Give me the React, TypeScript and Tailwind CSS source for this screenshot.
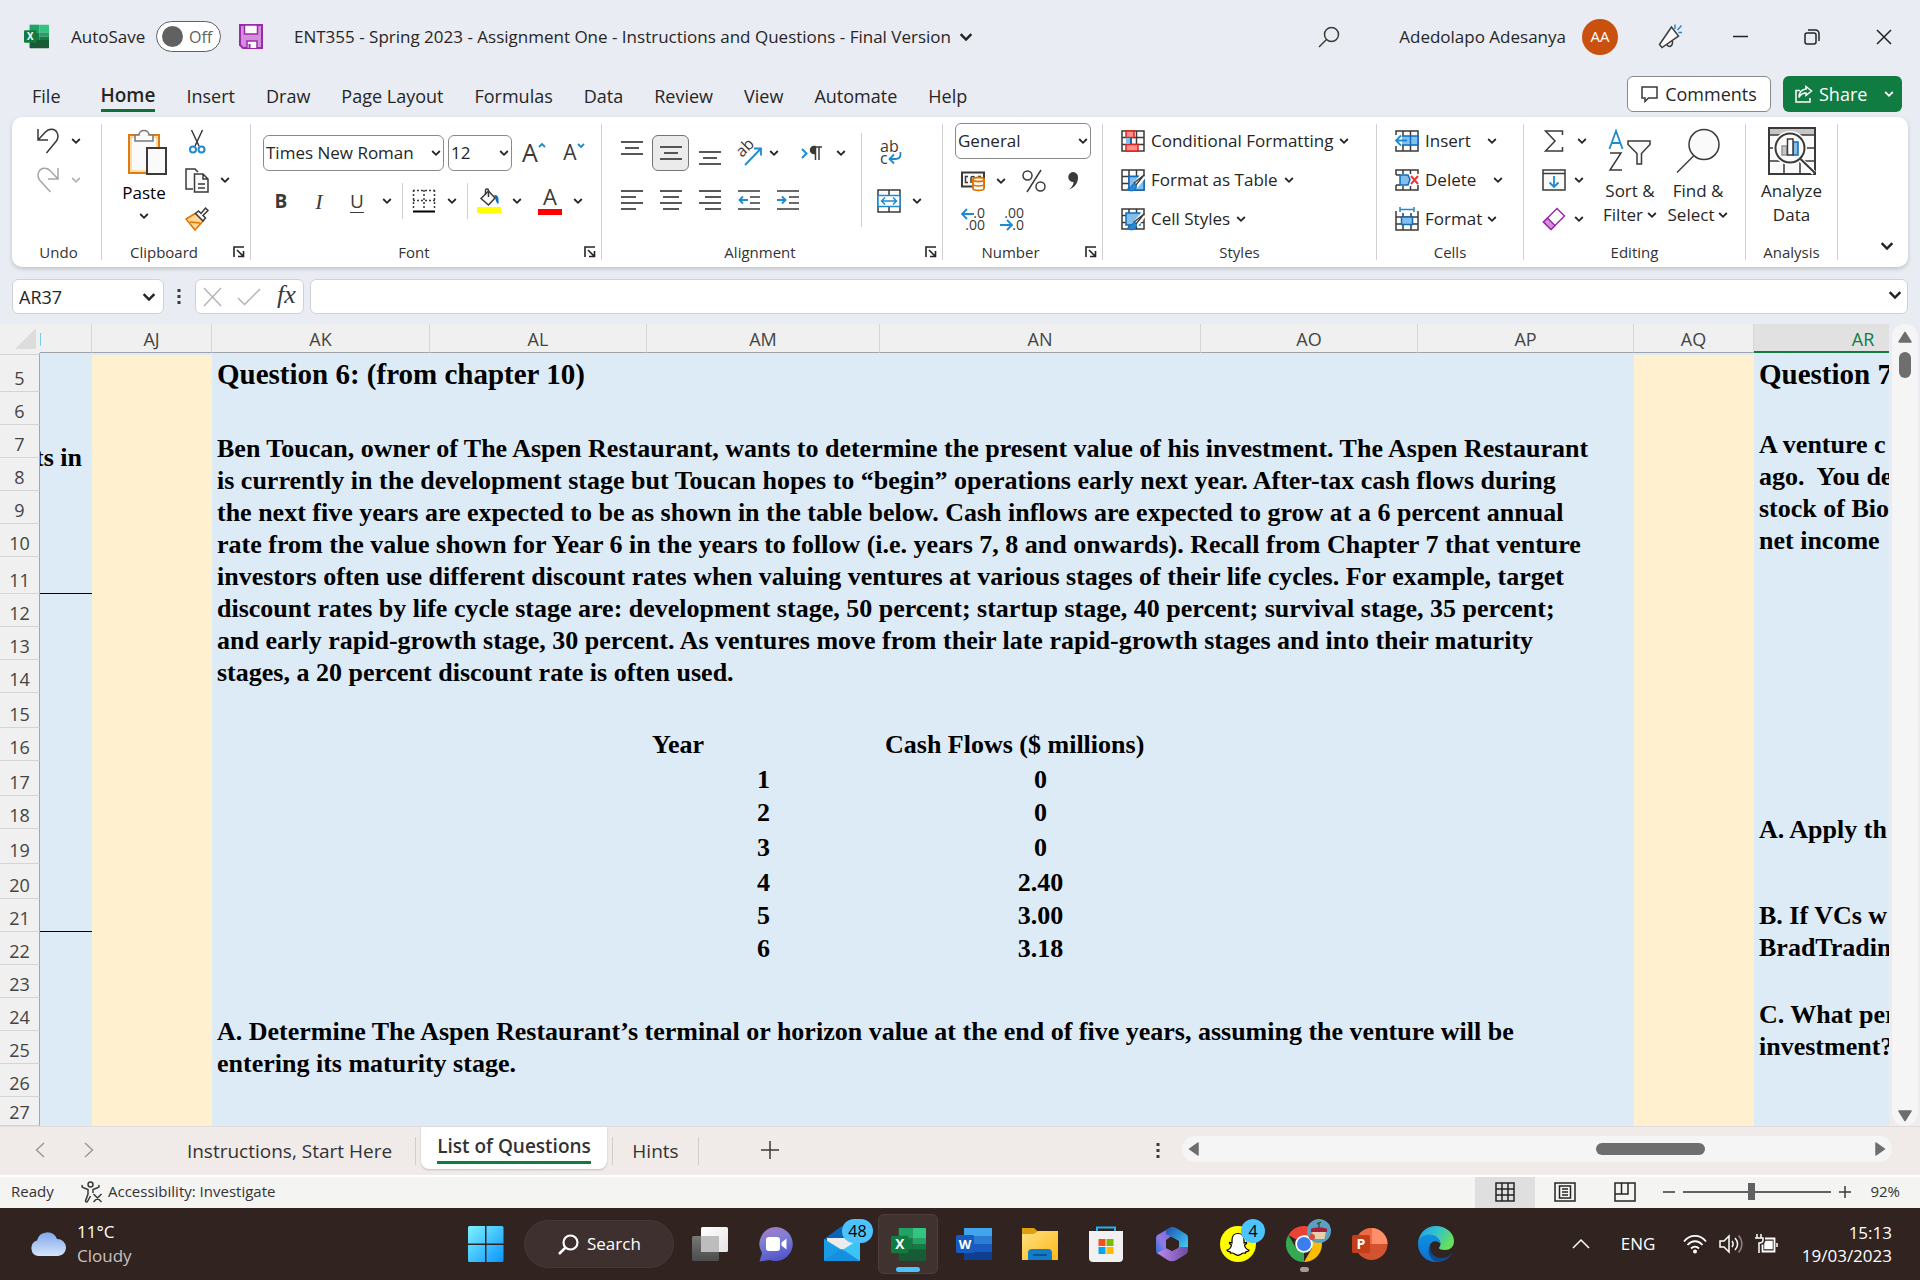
import type { ReactNode } from "react";

const INK = "#3b3a39";
const BLUE = "#1e8bd0";

/* ---------- icon helpers ---------- */

function Svg({ w, h, children, className = "" }: { w: number; h: number; children: ReactNode; className?: string }) {
  return (
    <svg
      width={w}
      height={h}
      viewBox={`0 0 ${w} ${h}`}
      fill="none"
      stroke={INK}
      strokeWidth="1.5"
      className={`shrink-0 overflow-visible ${className}`}
      aria-hidden="true"
    >
      {children}
    </svg>
  );
}

function Chevron({ color = "#242424", size = 10 }: { color?: string; size?: number }) {
  return (
    <svg width={size} height={size} viewBox="0 0 10 10" fill="none" className="shrink-0" aria-hidden="true">
      <path d="M1.2 3 5 6.8 8.8 3" stroke={color} strokeWidth="1.8" />
    </svg>
  );
}

function Lines({ rows, className = "" }: { rows: [number, number, number][]; className?: string }) {
  return (
    <Svg w={22} h={24} className={className}>
      {rows.map(([x1, x2, y]) => (
        <path key={y} d={`M${x1} ${y}H${x2}`} strokeWidth="1.7" />
      ))}
    </Svg>
  );
}

function Launcher() {
  return (
    <button type="button" aria-label="More options" className="flex w-6 items-center pl-[7px]">
      <Svg w={12} h={12}>
        <path d="M1 11V1h10M4 4l6 6M10.500 5v5.500H5" stroke="#242424" strokeWidth="1.6" />
      </Svg>
    </button>
  );
}

function ExcelLogo({ size }: { size: number }) {
  return (
    <svg width={size} height={size} viewBox="0 0 36 34" aria-hidden="true" className="shrink-0">
      <path d="M8 0h14v11H8z" fill="#21a366" />
      <path d="M22 0h13a1 1 0 0 1 1 1v10H22z" fill="#33c481" />
      <path d="M8 11h14v11H8z" fill="#107c41" />
      <path d="M22 11h14v6H22z" fill="#21a366" />
      <path d="M22 17h14v6H22z" fill="#107c41" />
      <path d="M8 22h28v11a1 1 0 0 1-1 1H9a1 1 0 0 1-1-1z" fill="#185c37" />
      <rect x="0" y="8" width="18" height="18" rx="1.500" fill="#107c41" />
      <text x="9" y="22" textAnchor="middle" fontFamily="Open Sans" fontWeight="700" fontSize="14" fill="#fff">
        X
      </text>
    </svg>
  );
}

/* ---------- title bar and tabs ---------- */

function TitleBar() {
  return (
    <header className="flex h-[73px] items-center pr-7 pl-6 text-[17px] text-[#262626]">
      <ExcelLogo size={25} />
      <label className="ml-[22px] flex items-center">
        <span className="w-[85px]">AutoSave</span>
        <span className="flex h-[31px] w-[65px] items-center gap-1.5 rounded-full border border-[#616161] bg-white pl-[5px] text-[16px] text-[#616161]">
          <input type="checkbox" role="switch" className="size-[21px] appearance-none rounded-full bg-[#616161]" />
          Off
        </span>
      </label>
      <button type="button" aria-label="Save" className="ml-[18px]">
        <Svg w={24} h={25}>
          <path d="M1 1h22v23H4l-3-3z" fill="#d48fdc" stroke="#9a2ba8" strokeWidth="2" />
          <path d="M5.500 1h13v9h-13zM8 24v-7h10v7" fill="#fafafa" stroke="#9a2ba8" />
          <path d="M10.500 20v4" stroke="#9a2ba8" strokeWidth="2" />
        </Svg>
      </button>
      <button type="button" className="ml-[31px] flex items-center gap-2">
        <span>ENT355 - Spring 2023 - Assignment One - Instructions and Questions - Final Version</span>
        <Chevron size={14} />
      </button>

      <div className="ml-auto flex items-center">
        <button type="button" aria-label="Search">
          <Svg w={22} h={22}>
            <circle cx="13.500" cy="8.500" r="7" />
            <path d="M8.500 13.500 1 21" />
          </Svg>
        </button>
        <span className="ml-[54px] w-[172px] text-right">Adedolapo Adesanya</span>
        <span className="ml-4 flex size-9 items-center justify-center rounded-full bg-[#ca5010] text-[15px] text-white">AA</span>
        <button type="button" aria-label="Coming soon" className="ml-10">
          <Svg w={24} h={25}>
            <path d="M13.500 3 1.500 20.500l2.500 3L20.500 12z" fill="#fafafa" />
            <path d="M9 20.500c1 3 6 3 5.500-3.500" />
            <path d="M17 5V.5M19.500 6l4-4.500M20.500 8.500H24" stroke={BLUE} />
          </Svg>
        </button>
        <button type="button" aria-label="Minimize" className="ml-[51px]">
          <Svg w={15} h={16}>
            <path d="M0 7.500h15" stroke="#242424" />
          </Svg>
        </button>
        <button type="button" aria-label="Restore" className="ml-14">
          <Svg w={16} h={16}>
            <rect x="1" y="4" width="11" height="11" rx="2" stroke="#242424" />
            <path d="M4 1h7.500A3.500 3.500 0 0 1 15 4.500V12" stroke="#242424" />
          </Svg>
        </button>
        <button type="button" aria-label="Close" className="ml-14">
          <Svg w={16} h={16}>
            <path d="m1 1 14 14M15 1 1 15" stroke="#242424" />
          </Svg>
        </button>
      </div>
    </header>
  );
}

const TABS = ["Insert", "Draw", "Page Layout", "Formulas", "Data", "Review", "View", "Automate", "Help"];

function TabBar() {
  return (
    <div className="flex h-11 items-start pr-[18px] pl-8 text-[18px] leading-[30px] text-[#262626]">
      <nav className="flex gap-[31px] pt-[7px]">
        <button type="button" className="mr-[9px]">File</button>
        <button type="button" className="h-8 border-b-[3px] border-[#0f703b] text-[19px] font-semibold">Home</button>
        {TABS.map((tab) => (
          <button key={tab} type="button">{tab}</button>
        ))}
      </nav>
      <div className="ml-auto flex gap-3 pt-[3px]">
        <button
          type="button"
          className="flex h-9 w-36 items-center justify-center gap-[7px] rounded-md border border-[#8a8a8a] bg-white"
        >
          <Svg w={17} h={17}>
            <path d="M1 1h15v11H7.500L4 15.500V12H1z" />
          </Svg>
          Comments
        </button>
        <button
          type="button"
          className="flex h-9 w-[119px] items-center rounded-md bg-[#107c41] pl-3 text-white"
        >
          <Svg w={18} h={18}>
            <path d="M5 5.500H1V17h14v-4" stroke="#fff" />
            <path d="M11 1.500 16.500 6 11 10.500V8C7.500 8 5.500 9.500 4 12.500 4 8 6.500 4.500 11 4z" stroke="#fff" />
          </Svg>
          <span className="ml-1.5 w-[65px] text-left">Share</span>
          <Chevron color="#fff" />
        </button>
      </div>
    </div>
  );
}

/* ---------- ribbon ---------- */

function Group({ label, width, launcher, children }: { label: string; width: string; launcher?: boolean; children: ReactNode }) {
  return (
    <>
      <section aria-label={label} className={`flex shrink-0 flex-col pb-[5px] ${width}`}>
        <div className="flex h-[125px]">{children}</div>
        <div className="flex h-5 items-center text-[15px] leading-5 text-[#333]">
          <span className="flex-1 pb-px text-center">{label}</span>
          {launcher && <Launcher />}
        </div>
      </section>
      <div className="my-[7px] w-px shrink-0 bg-[#d1d1d1]" />
    </>
  );
}

function Tool({ label, width, active, children }: { label: string; width: string; active?: boolean; children?: ReactNode }) {
  return (
    <button
      type="button"
      aria-label={label}
      className={`flex h-9 shrink-0 items-center justify-center ${width} ${
        active ? "rounded-md border border-[#757575] bg-[#ebebeb]" : ""
      }`}
    >
      {children}
    </button>
  );
}

function More({ width, color }: { width: string; color?: string }) {
  return (
    <Tool label="More" width={width}>
      <Chevron color={color} />
    </Tool>
  );
}

function Combo({ label, value, width }: { label: string; value: string; width: string }) {
  return (
    <div className={`relative ${width}`}>
      <select
        aria-label={label}
        className="block h-9 w-full appearance-none rounded-md border border-[#8a8a8a] bg-white pl-[2px] text-[17px] text-[#262626]"
      >
        <option>{value}</option>
      </select>
      <span className="pointer-events-none absolute top-[13px] right-[3px]">
        <Chevron />
      </span>
    </div>
  );
}

function GridLines() {
  return <path d="M1 1h22v20H1zM1 7.500h22M1 14.500h22M8 1v20M15.500 1v20" />;
}

function Brush() {
  return (
    <>
      <path d="M22.500 6.500 14 17" stroke="#fff" strokeWidth="6" />
      <path d="M23 6 15 16l-2-2z" fill="#fafafa" stroke={INK} strokeWidth="1.300" />
      <path d="M14 14.500c-4 0-3 5-7.500 5.500 3 3.500 9 2 9-3.500z" fill="#2b88d8" stroke="#0f6cbd" strokeWidth="1" />
    </>
  );
}

function UndoGroup() {
  return (
    <Group label="Undo" width="w-[89px] pl-1">
      <div className="pt-[6px] pl-[21px]">
        <div className="mb-[3px] flex items-center">
          <Tool label="Undo" width="w-[22px]">
            <Svg w={22} h={26}>
              <path d="M1 1v11h10M1.500 11.500 8 4.500c4-4.500 10-4 12 0 2 4 1 6.500-1 9L9.500 25" />
            </Svg>
          </Tool>
          <More width="w-[34px]" />
        </div>
        <div className="flex items-center">
          <Tool label="Redo" width="w-[22px]">
            <Svg w={22} h={26}>
              <path d="M21 1v11H11M20.500 11.500 14 4.500c-4-4.500-10-4-12 0-2 4-1 6.500 1 9L13.500 25" stroke="#a6a6a6" />
            </Svg>
          </Tool>
          <More width="w-[34px]" color="#b5b5b5" />
        </div>
      </div>
    </Group>
  );
}

function ClipboardGroup() {
  return (
    <Group label="Clipboard" width="w-[148px]" launcher>
      <button type="button" className="ml-[14px] flex w-14 flex-col items-center pt-3 text-[17px] leading-6">
        <Svg w={40} h={46} className="ml-1.5">
          <path d="M2 6h30v38H2z" fill="#fff" stroke="#e07b13" strokeWidth="2" />
          <path d="M4 8h26v34H4z" fill="#fafafa" stroke="#fbd38d" />
          <path d="M8 12V6h4c0-6 10-6 10 0h4v6z" fill="#fafafa" stroke="#7a7a7a" />
          <rect x="20" y="19" width="19" height="26" fill="#fafafa" strokeWidth="2" />
        </Svg>
        <span className="mt-1.5 mb-1.5">Paste</span>
        <Chevron />
      </button>
      <div className="ml-[13px] flex flex-col gap-[3px] pt-[6px]">
        <Tool label="Cut" width="w-6">
          <Svg w={24} h={25}>
            <path d="M6.500 1 14 17M17.500 1 10 17" />
            <circle cx="8" cy="20.500" r="3" stroke={BLUE} strokeWidth="2" />
            <circle cx="16.500" cy="20.500" r="3" stroke={BLUE} strokeWidth="2" />
          </Svg>
        </Tool>
        <div className="flex">
          <Tool label="Copy" width="w-6">
            <Svg w={24} h={25}>
              <path d="M8 21H1V1h9l3 3" fill="#fafafa" />
              <path d="M9.500 6H18l5 5v13H9.500zM18 6v5h5M13 16h7M13 20h7" fill="#fafafa" />
            </Svg>
          </Tool>
          <More width="w-8" />
        </div>
        <Tool label="Format Painter" width="w-6">
          <Svg w={24} h={24}>
            <path d="M11 6 1 12l9 11 8-9z" fill="#ffd79a" stroke="#e07400" />
            <path d="m5 15 10 1" stroke="#e07400" />
            <path d="m10.500 6.500 3-2.500 2.500 2.500L20.500 1 23 3.500 18 8.500l2.500 2.500-2.500 3z" fill="#fafafa" />
          </Svg>
        </Tool>
      </div>
    </Group>
  );
}

function FontGroup() {
  return (
    <Group label="Font" width="w-[350px]" launcher>
      <div className="flex flex-col gap-3 pt-[18px] pl-[11px]">
        <div className="flex items-center">
          <Combo label="Font" value="Times New Roman" width="ml-px w-[181px]" />
          <Combo label="Font size" value="12" width="ml-1 w-16" />
          <Tool label="Increase font size" width="ml-[11px] w-[22px]">
            <span className="text-[25px] text-[#3b3a39]">A</span>
            <Svg w={8} h={24}>
              <path d="m1 6 3-3 3 3" stroke={BLUE} strokeWidth="1.800" />
            </Svg>
          </Tool>
          <Tool label="Decrease font size" width="ml-[18px] w-[22px]">
            <span className="text-[21px] text-[#3b3a39]">A</span>
            <Svg w={8} h={24}>
              <path d="m1 3 3 3 3-3" stroke={BLUE} strokeWidth="1.800" />
            </Svg>
          </Tool>
        </div>
        <div className="flex items-center text-[19px] text-[#3b3a39]">
          <Tool label="Bold" width="w-[38px]"><b>B</b></Tool>
          <Tool label="Italic" width="w-[38px]"><i className="font-['Liberation_Serif',serif] text-[22px]">I</i></Tool>
          <Tool label="Underline" width="w-[38px]"><u className="underline-offset-4">U</u></Tool>
          <More width="w-[22px]" />
          <div className="ml-1 h-9 w-px bg-[#d1d1d1]" />
          <Tool label="Borders" width="ml-[9px] w-6">
            <Svg w={24} h={24}>
              <path d="M1.500 1v20M1 1.500h22M22.500 1v20M12 1v20M1 11.500h22" strokeDasharray="2 2" />
              <path d="M1 22.500h22" stroke="#000" strokeWidth="2" />
            </Svg>
          </Tool>
          <More width="w-[31px]" />
          <div className="h-9 w-px bg-[#d1d1d1]" />
          <Tool label="Fill color" width="ml-[9px] w-6">
            <Svg w={24} h={24}>
              <path d="M0 18h24v6H0z" fill="#ff0" stroke="none" />
              <path d="M4 9.500 11.500 2l6.500 7-6.500 7z" fill="#fafafa" />
              <path d="M11.500 8V1.500c0-2-3-2-3 0V6" />
              <path d="M17 6c4-.5 5 2 4.500 9-2.500-1-2.500-4-4.500-9z" fill="#0f6cbd" stroke="none" />
            </Svg>
          </Tool>
          <More width="w-8" />
          <Tool label="Font color" width="ml-[5px] w-6">
            <span className="h-7 w-6 border-b-[6px] border-[#f00] text-[22px] leading-[18px]">A</span>
          </Tool>
          <More width="w-8" />
        </div>
      </div>
    </Group>
  );
}

function AlignmentGroup() {
  return (
    <Group label="Alignment" width="w-[340px]" launcher>
      <div className="flex w-[259px] flex-col gap-3 pt-[18px] pl-[10px]">
        <div className="flex items-center">
          <Tool label="Top align" width="w-[39px]"><Lines rows={[[0, 22, 1], [4, 18, 7], [0, 22, 13]]} /></Tool>
          <Tool label="Middle align" width="mx-px w-[37px]" active><Lines rows={[[0, 22, 6], [4, 18, 12], [0, 22, 18]]} /></Tool>
          <Tool label="Bottom align" width="w-[39px]"><Lines rows={[[0, 22, 11], [4, 18, 17], [0, 22, 23]]} /></Tool>
          <Tool label="Orientation" width="w-[39px]">
            <Svg w={26} h={26}>
              <text x="0" y="0" transform="translate(6 18) rotate(-45)" fontFamily="Open Sans" fontSize="16" fill={INK} stroke="none">
                ab
              </text>
              <path d="M9 25 24.500 9M18 8.500h7v7" stroke={BLUE} strokeWidth="1.800" />
            </Svg>
          </Tool>
          <More width="w-3" />
          <Tool label="Text direction" width="ml-[21px] w-[22px]">
            <Svg w={22} h={18}>
              <path d="m1 5 4.500 4.500L1 14" stroke={BLUE} strokeWidth="2" />
              <path d="M14.500 16V3M18 16V3M21 3h-7" />
              <path d="M14 2.500h-1a3.500 3.500 0 0 0 0 7h1z" fill={INK} />
            </Svg>
          </Tool>
          <More width="ml-1.5 w-6" />
        </div>
        <div className="flex items-center">
          <Tool label="Align left" width="w-[39px]"><Lines rows={[[0, 22, 2], [0, 15, 8], [0, 22, 14], [0, 15, 20]]} /></Tool>
          <Tool label="Center" width="w-[39px]"><Lines rows={[[0, 22, 2], [3, 19, 8], [0, 22, 14], [3, 19, 20]]} /></Tool>
          <Tool label="Align right" width="w-[39px]"><Lines rows={[[0, 22, 2], [6, 22, 8], [0, 22, 14], [6, 22, 20]]} /></Tool>
          <Tool label="Decrease indent" width="w-[39px]">
            <Svg w={22} h={24}>
              <path d="M0 2h22M12 8h10M12 14h10M0 20h22" strokeWidth="1.700" />
              <path d="M10 11H1.500M5 7.500 1.500 11 5 14.500" stroke={BLUE} strokeWidth="1.800" />
            </Svg>
          </Tool>
          <Tool label="Increase indent" width="w-[39px]">
            <Svg w={22} h={24}>
              <path d="M0 2h22M12 8h10M12 14h10M0 20h22" strokeWidth="1.700" />
              <path d="M0 11h8.500M5 7.500 8.500 11 5 14.500" stroke={BLUE} strokeWidth="1.800" />
            </Svg>
          </Tool>
        </div>
      </div>
      <div className="mt-4 h-[94px] w-px bg-[#d1d1d1]" />
      <div className="flex flex-col gap-3 pt-[18px] pl-[15px]">
        <Tool label="Wrap text" width="w-[28px]">
          <Svg w={22} h={26}>
            <text x="0" y="12" fontFamily="Open Sans" fontSize="16" fill={INK} stroke="none">ab</text>
            <text x="0" y="24" fontFamily="Open Sans" fontSize="16" fill={INK} stroke="none">c</text>
            <path d="M20.500 12v2c0 3-2 5-5 5H10M14 14.500 9.500 19l4.500 4.500" stroke={BLUE} strokeWidth="1.800" />
          </Svg>
        </Tool>
        <div className="flex">
          <Tool label="Merge and center" width="w-6">
            <Svg w={24} h={24}>
              <path d="M1 1h22v22H1zM12 1v22" />
              <path d="M1 6.500h22v11H1z" fill="#fff" stroke={BLUE} />
              <path d="M4.500 12h15M8 8.500 4.500 12 8 15.500M16 8.500l3.500 3.500-3.500 3.500" stroke={BLUE} />
            </Svg>
          </Tool>
          <More width="w-8" />
        </div>
      </div>
    </Group>
  );
}

function NumberGroup() {
  return (
    <Group label="Number" width="w-[159px]" launcher>
      <div className="pt-[6px] pl-3">
        <Combo label="Number format" value="General" width="w-[136px]" />
        <div className="mt-1 flex items-center pl-[6px]">
          <Tool label="Accounting format" width="w-6">
            <Svg w={24} h={20}>
              <path d="M1 1.500h22v14H1z" fill="#fafafa" strokeWidth="2" />
              <path d="M7 5.500H4.500v6H7M10 12V7c0-2 3.500-2 3.500 0M17 5.500h3" />
              <path d="M12 8.500v9c0 2.500 11 2.500 11 0v-9z" fill="#fff" stroke="#e07400" strokeWidth="1.800" />
              <ellipse cx="17.500" cy="8.500" rx="5.500" ry="2" fill="#fff" stroke="#e07400" strokeWidth="1.800" />
              <path d="M12 13c0 2.500 11 2.500 11 0" stroke="#e07400" />
            </Svg>
          </Tool>
          <More width="w-8" />
          <Tool label="Percent style" width="ml-[6px] w-[22px]">
            <Svg w={24} h={24}>
              <circle cx="5.500" cy="6.500" r="4.500" />
              <circle cx="18.500" cy="17.500" r="4.500" />
              <path d="M19 1 5 23" />
            </Svg>
          </Tool>
          <Tool label="Comma style" width="ml-[22px] w-3">
            <Svg w={12} h={20}>
              <path d="M6 1a5 5 0 0 1 5 5.500C11 12.500 7 17 2 18.500 5 16 6.500 13.500 6.500 11A5 5 0 1 1 6 1z" fill={INK} stroke="none" />
            </Svg>
          </Tool>
        </div>
        <div className="mt-[2px] flex items-center gap-[15px] pl-[6px]">
          <Tool label="Increase decimal" width="w-6">
            <Svg w={24} h={26}>
              <text x="24" y="12" textAnchor="end" fontFamily="Open Sans" fontSize="14" fill={INK} stroke="none">.0</text>
              <text x="24" y="24" textAnchor="end" fontFamily="Open Sans" fontSize="14" fill={INK} stroke="none">.00</text>
              <path d="M13 8H1M6 3 1 8l5 5" stroke={BLUE} strokeWidth="1.800" />
            </Svg>
          </Tool>
          <Tool label="Decrease decimal" width="w-6">
            <Svg w={24} h={26}>
              <text x="24" y="12" textAnchor="end" fontFamily="Open Sans" fontSize="14" fill={INK} stroke="none">.00</text>
              <text x="24" y="24" textAnchor="end" fontFamily="Open Sans" fontSize="14" fill={INK} stroke="none">.0</text>
              <path d="M0 19h12M7 14l5 5-5 5" stroke={BLUE} strokeWidth="1.800" />
            </Svg>
          </Tool>
        </div>
      </div>
    </Group>
  );
}

function MenuRow({ icon, text, textWidth = "" }: { icon: ReactNode; text: string; textWidth?: string }) {
  return (
    <button type="button" className="flex h-[39px] items-center gap-[6px] text-[17px] text-[#262626]">
      {icon}
      <span className={`text-left whitespace-nowrap ${textWidth}`}>{text}</span>
      <Chevron />
    </button>
  );
}

function StylesGroup() {
  return (
    <Group label="Styles" width="w-[273px]">
      <div className="pt-1 pl-[18px]">
        <MenuRow
          text="Conditional Formatting"
          icon={
            <Svg w={24} h={22}>
              <GridLines />
              <path d="M5 1h8v6.500H5zM5 14.500h12V21H5z" fill="#ff8f8f" stroke="#e3241b" />
              <path d="M5 8h5.500v6H5z" fill="#83beec" stroke="none" />
              <path d="M10 8v6" stroke="#0f6cbd" strokeWidth="2" />
            </Svg>
          }
        />
        <MenuRow
          text="Format as Table"
          icon={
            <Svg w={24} h={22}>
              <GridLines />
              <path d="M8 7.500h15V21H8z" fill="#83beec" stroke="#0f6cbd" />
              <Brush />
            </Svg>
          }
        />
        <MenuRow
          text="Cell Styles"
          icon={
            <Svg w={24} h={22}>
              <GridLines />
              <path d="M5 5h14v12H5z" fill="#83beec" stroke="#0f6cbd" />
              <Brush />
            </Svg>
          }
        />
      </div>
    </Group>
  );
}

function CellsGroup() {
  return (
    <Group label="Cells" width="w-[146px]">
      <div className="pt-1 pl-[18px]">
        <MenuRow
          text="Insert"
          textWidth="w-[56px]"
          icon={
            <Svg w={24} h={22}>
              <GridLines />
              <path d="M6 6h17v9H6z" fill="#83beec" stroke="#0f6cbd" />
              <path d="M0 5h7v11H0z" fill="#fff" stroke="none" />
              <path d="M15.500 6v9" stroke="#0f6cbd" />
              <path d="M12 10.500H1M6 5.500l-5 5 5 5" stroke={BLUE} strokeWidth="1.800" />
            </Svg>
          }
        />
        <MenuRow
          text="Delete"
          textWidth="w-[62px]"
          icon={
            <Svg w={24} h={22}>
              <path d="M1 6V1h22v4M1 16v5h22v-5M8 1v4M15.500 1v4M8 17v4M15.500 17v4M1 6h4M1 16h4" />
              <path d="M5 6h8l2 4.500-2 5.500H5z" fill="#83beec" stroke="#0f6cbd" />
              <path d="m16 7 7 8M23 7l-7 8" stroke="#e83a3a" strokeWidth="2" />
            </Svg>
          }
        />
        <MenuRow
          text="Format"
          textWidth="w-[56px]"
          icon={
            <Svg w={24} h={24}>
              <path d="M1 4v19h22V4M1 10h22M1 17h22M8 6v17M16 6v17" />
              <path d="M6.500 10h11v7.500h-11z" fill="#83beec" stroke="#0f6cbd" />
              <path d="M5 0v5M19 0v5M5 2.500h14" stroke={BLUE} />
            </Svg>
          }
        />
      </div>
    </Group>
  );
}

function BigTool({ width, icon, lines, menu }: { width: string; icon: ReactNode; lines: [string, string]; menu?: boolean }) {
  return (
    <button type="button" className={`flex flex-col items-center pt-[10px] text-[17px] leading-6 text-[#262626] ${width}`}>
      <span className="flex h-12 items-center">{icon}</span>
      <span className="mt-1">{lines[0]}</span>
      <span className="flex items-center gap-1">
        {lines[1]}
        {menu && <Chevron />}
      </span>
    </button>
  );
}

function EditingGroup() {
  return (
    <Group label="Editing" width="w-[221px]">
      <div className="flex flex-col gap-[3px] pt-[6px] pl-[18px]">
        <div className="flex">
          <Tool label="AutoSum" width="w-6">
            <Svg w={20} h={24}>
              <path d="M18.500 6V2H1.500l9.500 10-9.500 10h17v-4" />
            </Svg>
          </Tool>
          <More width="ml-1 w-6" />
        </div>
        <div className="flex">
          <Tool label="Fill" width="w-6">
            <Svg w={24} h={22}>
              <path d="M1 1h22v20H1z" fill="#fafafa" />
              <path d="M1 4.500h22" />
              <path d="M12 7v11M7.500 13.500 12 18l4.500-4.500" stroke={BLUE} strokeWidth="1.800" />
            </Svg>
          </Tool>
          <More width="w-[26px]" />
        </div>
        <div className="flex">
          <Tool label="Clear" width="w-6">
            <Svg w={24} h={24}>
              <path d="M15 1.500 22.500 9 9 22.500 1.500 15z" fill="#fff" stroke="#9a2ba8" />
              <path d="m5.500 11 7.500 7.500-4 4L1.500 15z" fill="#d48fdc" stroke="#9a2ba8" />
            </Svg>
          </Tool>
          <More width="w-[26px]" />
        </div>
      </div>
      <BigTool
        width="ml-[2px] w-[68px]"
        lines={["Sort &", "Filter"]}
        menu
        icon={
          <Svg w={44} h={44}>
            <path d="M1.500 20 8 2l6.500 18M3.500 14h9" stroke={BLUE} strokeWidth="1.800" />
            <path d="M2 24h11L2 41h12" />
            <path d="M20 12h22v3.500l-8.500 9V35H29V24.500L20 15.500z" fill="#fafafa" />
          </Svg>
        }
      />
      <BigTool
        width="w-[68px]"
        lines={["Find &", "Select"]}
        menu
        icon={
          <Svg w={44} h={46}>
            <circle cx="28" cy="16.500" r="15" fill="#fafafa" />
            <path d="M17.500 28 1 44.500" />
          </Svg>
        }
      />
    </Group>
  );
}

function AnalysisGroup() {
  return (
    <Group label="Analysis" width="w-[91px]">
      <BigTool
        width="w-full"
        lines={["Analyze", "Data"]}
        icon={
          <Svg w={48} h={48}>
            <path d="M1 1h46v46H1z" fill="#fafafa" strokeWidth="2" />
            <path d="M2 2h44v6H2z" fill="#c8c6c4" stroke="none" />
            <path d="M1 8h46M1 21h46M1 34h46M16 34v13M32 34v13" />
            <circle cx="22" cy="21" r="17" fill="#fff" stroke="none" />
            <path d="m33 33 13 13" stroke="#fff" strokeWidth="5" />
            <circle cx="22" cy="21" r="14.500" fill="#fafafa" strokeWidth="2" />
            <path d="M32.500 32 47 46" strokeWidth="2" />
            <path d="M14 19h5v9h-5z" fill="#c8c6c4" stroke="#979593" />
            <path d="M25 15h5v13h-5z" fill="#83beec" stroke="#0f6cbd" />
            <path d="M19.500 12H25v16h-5.500z" fill="#fff" />
          </Svg>
        }
      />
    </Group>
  );
}

function Ribbon() {
  return (
    <div className="mx-3 flex rounded-[10px] bg-white shadow-[0_2px_4px_rgba(0,0,0,0.18)]">
      <UndoGroup />
      <ClipboardGroup />
      <FontGroup />
      <AlignmentGroup />
      <NumberGroup />
      <StylesGroup />
      <CellsGroup />
      <EditingGroup />
      <AnalysisGroup />
      <button type="button" aria-label="Collapse ribbon" className="mr-3.5 mb-3.5 ml-auto self-end">
        <Chevron size={14} />
      </button>
    </div>
  );
}

function FormulaBar() {
  return (
    <div className="flex items-center px-3 pt-3 pb-[10px]">
      <div className="relative w-[152px]">
        <input
          aria-label="Name box"
          defaultValue="AR37"
          className="block h-[35px] w-full rounded-md border border-[#d1d1d1] bg-white pl-1.5 text-[18px] text-[#262626]"
        />
        <span className="pointer-events-none absolute top-[11px] right-2">
          <Chevron size={14} />
        </span>
      </div>
      <Svg w={4} h={18} className="ml-[13px]">
        <path d="M2 1v3M2 7v3M2 13v3" strokeWidth="3" />
      </Svg>
      <div className="ml-[14px] flex h-[35px] w-[109px] items-center rounded-md border border-[#d1d1d1] bg-white pl-[7px]">
        <button type="button" aria-label="Cancel">
          <Svg w={20} h={20}>
            <path d="m1 1 17 18M18 1 1 19" stroke="#b5b5b5" />
          </Svg>
        </button>
        <button type="button" aria-label="Enter" className="ml-3.5">
          <Svg w={24} h={20}>
            <path d="m1 11 6.500 6.500L23 2" stroke="#b5b5b5" />
          </Svg>
        </button>
        <button
          type="button"
          aria-label="Insert function"
          className="ml-4 pb-1 font-['Liberation_Serif',serif] text-[26px] leading-7 text-[#3b3a39] italic"
        >
          fx
        </button>
      </div>
      <div className="relative ml-[6px] flex-1">
        <input
          aria-label="Formula"
          className="block h-[35px] w-full rounded-md border border-[#d1d1d1] bg-white px-2 text-[17px]"
        />
        <span className="pointer-events-none absolute top-[9px] right-1.5">
          <Chevron size={14} />
        </span>
      </div>
    </div>
  );
}

/* ---------- worksheet ---------- */

const COLUMNS = [
  { name: "AI", width: "w-[52px]", fill: "bg-[#ddebf6]" },
  { name: "AJ", width: "w-[120px]", fill: "bg-[#fff1cf]" },
  { name: "AK", width: "w-[218px]", fill: "bg-[#ddebf6]" },
  { name: "AL", width: "w-[217px]", fill: "bg-[#ddebf6]" },
  { name: "AM", width: "w-[233px]", fill: "bg-[#ddebf6]" },
  { name: "AN", width: "w-[321px]", fill: "bg-[#ddebf6]" },
  { name: "AO", width: "w-[217px]", fill: "bg-[#ddebf6]" },
  { name: "AP", width: "w-[216px]", fill: "bg-[#ddebf6]" },
  { name: "AQ", width: "w-[120px]", fill: "bg-[#fff1cf]" },
  { name: "AR", width: "", fill: "bg-[#ddebf6]" },
];

const SHORT = "h-[33px]";
const MID = "h-[35px]";
const TALL = "h-[37px]";
const ROWS: [number, string][] = [
  [5, TALL], [6, SHORT], [7, SHORT], [8, SHORT], [9, SHORT], [10, SHORT], [11, TALL], [12, SHORT],
  [13, SHORT], [14, SHORT], [15, MID], [16, SHORT], [17, MID], [18, SHORT], [19, MID], [20, MID],
  [21, SHORT], [22, SHORT], [23, SHORT], [24, SHORT], [25, SHORT], [26, SHORT], [27, "h-[29px]"],
];

const CASH_FLOWS: Record<number, [string, string]> = {
  17: ["1", "0"],
  18: ["2", "0"],
  19: ["3", "0"],
  20: ["4", "2.40"],
  21: ["5", "3.00"],
  22: ["6", "3.18"],
};

const PROBLEM = [
  "Ben Toucan, owner of The Aspen Restaurant, wants to determine the present value of his investment. The Aspen Restaurant",
  "is currently in the development stage but Toucan hopes to “begin” operations early next year. After-tax cash flows during",
  "the next five years are expected to be as shown in the table below. Cash inflows are expected to grow at a 6 percent annual",
  "rate from the value shown for Year 6 in the years to follow (i.e. years 7, 8 and onwards). Recall from Chapter 7 that venture",
  "investors often use different discount rates when valuing ventures at various stages of their life cycles. For example, target",
  "discount rates by life cycle stage are: development stage, 50 percent; startup stage, 40 percent; survival stage, 35 percent;",
  "and early rapid-growth stage, 30 percent. As ventures move from their late rapid-growth stages and into their maturity",
  "stages, a 20 percent discount rate is often used.",
];

const PART_A = [
  "A. Determine The Aspen Restaurant’s terminal or horizon value at the end of five years, assuming the venture will be",
  "entering its maturity stage.",
];

// Text blocks in column AR: first row -> rows covered and lines.
const RIGHT_BLOCKS: Record<number, { span: number; lines: string[]; className?: string }> = {
  5: { span: 1, lines: ["Question 7"], className: "text-[29px]" },
  7: { span: 4, lines: ["A venture c", "ago.\u00a0 You de", "stock of Bio", "net income"], className: "pt-1" },
  18: { span: 2, lines: ["A. Apply th"] },
  21: { span: 2, lines: ["B. If VCs w", "BradTradin"] },
  24: { span: 2, lines: ["C. What per", "investment?"] },
};
const RIGHT_COVERED = [8, 9, 10, 19, 22, 25];

function TextLines({ lines }: { lines: string[] }) {
  return (
    <>
      {lines.map((line) => (
        <p key={line}>{line}</p>
      ))}
    </>
  );
}

function MainCells({ row }: { row: number }) {
  if ((row > 7 && row <= 14) || row === 25 || row === 26) return null;
  if (row === 5) return <td colSpan={6} className="px-[5px] text-[29px]">Question 6: (from chapter 10)</td>;
  if (row === 7) return <td colSpan={6} rowSpan={8} className="px-[5px] pt-1"><TextLines lines={PROBLEM} /></td>;
  if (row === 24) return <td colSpan={6} rowSpan={3} className="px-[5px]"><TextLines lines={PART_A} /></td>;
  if (row === 16) {
    return (
      <>
        <td colSpan={2} />
        <td className="px-[5px] align-bottom">Year</td>
        <td className="px-[5px] align-bottom">Cash Flows ($ millions)</td>
        <td colSpan={2} />
      </>
    );
  }
  const flow = CASH_FLOWS[row];
  if (!flow) return <td colSpan={6} />;
  return (
    <>
      <td colSpan={2} />
      <td className="text-center align-bottom">{flow[0]}</td>
      <td className="text-center align-bottom">{flow[1]}</td>
      <td colSpan={2} />
    </>
  );
}

function SheetRow({ row, height }: { row: number; height: string }) {
  const right = RIGHT_BLOCKS[row];
  return (
    <tr className={height}>
      <th
        scope="row"
        className="border-r border-b border-r-[#a3a7ab] border-b-[#d4d4d4] bg-[#f0f0f0] align-bottom font-['Open_Sans',sans-serif] text-[18px] leading-[25px] font-normal text-[#444]"
      >
        {row}
      </th>
      {row === 7 && (
        <td rowSpan={2} className="overflow-hidden">
          <div className="flex justify-end pr-[10px]">ts in</div>
        </td>
      )}
      {row !== 7 && row !== 8 && <td className={row === 11 || row === 21 ? "border-b border-black" : ""} />}
      <td />
      <MainCells row={row} />
      <td />
      {right && (
        <td rowSpan={right.span} className={`overflow-hidden pl-[5px] ${right.className ?? ""}`}>
          <TextLines lines={right.lines} />
        </td>
      )}
      {!right && !RIGHT_COVERED.includes(row) && <td />}
    </tr>
  );
}

function columnHeadClass(name: string) {
  if (name === "AR") return "border-b-2 border-b-[#107c41] bg-[#e1e1e1] text-[#107c41]";
  if (name === "AI") return "border-r border-b border-r-[#d6d6d6] border-b-[#9fa3a7] text-[#2e75b6]";
  return "border-r border-b border-r-[#d6d6d6] border-b-[#9fa3a7] text-[#444]";
}

function ColumnLabel({ name }: { name: string }) {
  if (name === "AI") return <div className="flex w-[2px] justify-end">AI</div>;
  if (name === "AR") return <div className="w-[218px]">AR</div>;
  return <>{name}</>;
}

function Worksheet() {
  return (
    <div className="flex">
      <div className="min-w-0 flex-1 overflow-hidden">
        <table className="w-full table-fixed border-separate border-spacing-0 font-['Liberation_Serif',serif] text-[26px] leading-8 font-bold whitespace-nowrap text-black">
          <colgroup>
            <col className="w-10" />
            {COLUMNS.map((col) => (
              <col key={col.name} className={`${col.width} ${col.fill}`} />
            ))}
          </colgroup>
          <thead className="bg-[#f0f0f0] font-['Open_Sans',sans-serif] text-[18px] leading-6">
            <tr className="h-[29px]">
              <th aria-label="Select all">
                <svg width="21" height="21" viewBox="0 0 21 21" className="ml-[15px]" aria-hidden="true">
                  <path d="M21 0v21H0z" fill="#dcdcdc" />
                </svg>
              </th>
              {COLUMNS.map((col) => (
                <th key={col.name} scope="col" className={`overflow-hidden pt-[2px] font-normal ${columnHeadClass(col.name)}`}>
                  <ColumnLabel name={col.name} />
                </th>
              ))}
            </tr>
          </thead>
          <tbody>
            <tr className="h-[2px]">
              <td className="border-r border-b border-r-[#a3a7ab] border-b-[#d4d4d4] bg-[#f0f0f0]" />
              <td colSpan={10} />
            </tr>
            {ROWS.map(([row, height]) => (
              <SheetRow key={row} row={row} height={height} />
            ))}
          </tbody>
        </table>
      </div>
      <div className="mr-[2px] ml-[3px] flex w-[26px] flex-col items-center rounded-full bg-[#f5f5f5] pt-[7px] pb-1">
        <Svg w={14} h={12}>
          <path d="M7 1.500 13 11H1z" fill="#6e6e6e" stroke="#6e6e6e" strokeLinejoin="round" />
        </Svg>
        <div className="mt-[9px] h-[26px] w-3 rounded-full bg-[#6e6e6e]" />
        <Svg w={14} h={12} className="mt-auto">
          <path d="M7 10.500 13 1H1z" fill="#6e6e6e" stroke="#6e6e6e" strokeLinejoin="round" />
        </Svg>
      </div>
    </div>
  );
}

function SheetTabs() {
  return (
    <div className="flex h-[49px] border-t border-[#e0dcdb] text-[19px] text-[#333]">
      <button type="button" aria-label="Previous sheet" className="ml-[35px] pb-[2px]">
        <Svg w={10} h={16}><path d="M9 1 1.500 8 9 15" stroke="#9a9a9a" /></Svg>
      </button>
      <button type="button" aria-label="Next sheet" className="ml-[39px] pb-[2px]">
        <Svg w={10} h={16}><path d="m1 1 7.500 7L1 15" stroke="#9a9a9a" /></Svg>
      </button>
      <div className="ml-[76px] flex items-start">
        <button type="button" className="h-[49px] w-[245px] pr-1.5 text-center">Instructions, Start Here</button>
        <div className="mt-[10px] h-7 w-px bg-[#d1cdcc]" />
        <button type="button" className="ml-[5px] h-[42px] w-[186px] rounded-b-lg bg-white pb-[2px] shadow-[0_1px_2px_rgba(0,0,0,0.2)]">
          <span className="inline-block border-b-[3px] border-[#107c41] leading-[30px] font-semibold">List of Questions</span>
        </button>
        <div className="mt-[10px] ml-[5px] h-7 w-px bg-[#d1cdcc]" />
        <button type="button" className="h-[49px] w-[85px] text-center">Hints</button>
        <div className="mt-[10px] h-7 w-px bg-[#d1cdcc]" />
      </div>
      <button type="button" aria-label="New sheet" className="ml-[62px] pb-[2px]">
        <Svg w={18} h={18}><path d="M9 0v18M0 9h18" /></Svg>
      </button>
      <Svg w={4} h={18} className="mt-[15px] ml-auto">
        <path d="M2 1v3M2 7v3M2 13v3" strokeWidth="3" />
      </Svg>
      <div className="mt-[9px] mr-7 ml-[22px] flex h-[26px] w-[37%] items-center rounded-full bg-[#f5f5f5] px-[6px]">
        <Svg w={12} h={14}>
          <path d="M1.500 7 10 1v12z" fill="#6e6e6e" stroke="#6e6e6e" strokeLinejoin="round" />
        </Svg>
        <div className="ml-auto h-3 w-[109px] rounded-full bg-[#6e6e6e]" />
        <Svg w={12} h={14} className="ml-[169px]">
          <path d="M10.500 7 2 1v12z" fill="#6e6e6e" stroke="#6e6e6e" strokeLinejoin="round" />
        </Svg>
      </div>
    </div>
  );
}

function StatusBar() {
  return (
    <div className="flex h-[33px] items-center border-t-2 border-white bg-[#f4f4f3] pr-5 pb-[2px] pl-[11px] text-[15px] text-[#333]">
      <span className="w-[70px]">Ready</span>
      <button type="button" className="flex items-center gap-[5px]">
        <Svg w={22} h={22}>
          <circle cx="9.500" cy="3.500" r="2.500" />
          <path d="M1.500 4c-1.500 2 0 2.500 1.500 3l4 1.500V13l-2.500 7c0 1 1.500 1.500 2 .5L9.500 15M17.500 4c1.500 2 0 2.500-1.500 3l-4 1.500V12M12.500 13l8 8M20.500 13l-8 8" />
        </Svg>
        Accessibility: Investigate
      </button>
      <div className="ml-auto flex items-center">
        <button type="button" aria-label="Normal view" className="-mb-[2px] flex h-[31px] w-[60px] items-center justify-center bg-[#dfdfdf] pb-[2px]">
          <Svg w={20} h={20}><path d="M1 1h18v18H1zM1 7h18M1 13h18M7 1v18M13 1v18" stroke="#242424" /></Svg>
        </button>
        <button type="button" aria-label="Page layout view" className="flex w-[60px] justify-center">
          <Svg w={22} h={20}><path d="M1 1h20v18H1zM5.500 4h11v12h-11zM8 7h6M8 10h6M8 13h6" stroke="#242424" /></Svg>
        </button>
        <button type="button" aria-label="Page break view" className="flex w-[60px] justify-center">
          <Svg w={22} h={20}><path d="M1 1h20v18H1zM1 12h13V1M7.500 1v11" stroke="#242424" /></Svg>
        </button>
        <button type="button" aria-label="Zoom out" className="ml-2">
          <Svg w={12} h={12}><path d="M0 6h12" /></Svg>
        </button>
        <input
          type="range"
          aria-label="Zoom"
          min={10}
          max={190}
          defaultValue={92}
          className="mx-2 h-[2px] w-[148px] appearance-none bg-[#616161] [&::-webkit-slider-thumb]:h-[17px] [&::-webkit-slider-thumb]:w-[7px] [&::-webkit-slider-thumb]:appearance-none [&::-webkit-slider-thumb]:bg-[#616161]"
        />
        <button type="button" aria-label="Zoom in">
          <Svg w={12} h={12}><path d="M0 6h12M6 0v12" /></Svg>
        </button>
        <span className="ml-[19px]">92%</span>
      </div>
    </div>
  );
}

/* ---------- taskbar ---------- */

function TaskApp({ label, children }: { label: string; children: ReactNode }) {
  return (
    <button type="button" aria-label={label} className="relative flex h-[60px] w-[66px] items-center justify-center">
      <svg width="36" height="36" viewBox="0 0 36 36" aria-hidden="true">{children}</svg>
    </button>
  );
}

function Badge({ children, className }: { children: ReactNode; className: string }) {
  return (
    <span
      className={`absolute top-[5px] flex h-6 items-center justify-center rounded-full bg-[#4cc2ff] text-[16px] text-black ${className}`}
    >
      {children}
    </span>
  );
}

function TaskIcons() {
  return (
    <>
      <TaskApp label="Task view">
        <defs>
          <linearGradient id="tv" x1="0" y1="0" x2="0" y2="1"><stop stopColor="#777" /><stop offset="1" stopColor="#4c4c4c" /></linearGradient>
          <linearGradient id="tvw" x1="0" y1="0" x2="1" y2="1"><stop stopColor="#fff" /><stop offset="1" stopColor="#e4e4e4" /></linearGradient>
        </defs>
        <rect x="0" y="10" width="27" height="25" rx="1.500" fill="url(#tv)" />
        <rect x="9" y="1" width="27" height="25" rx="1.500" fill="url(#tvw)" />
        <path d="M9 10h18v16H9z" fill="#bdbdbd" />
      </TaskApp>
      <TaskApp label="Chat">
        <defs>
          <linearGradient id="ch" x1="0.300" y1="0" x2="0.600" y2="1"><stop stopColor="#a479c4" /><stop offset=".35" stopColor="#7f7fd5" /><stop offset="1" stopColor="#4f52c9" /></linearGradient>
        </defs>
        <path d="M18 1a17 17 0 1 1-6 33l-10.500 1.500L4 27A17 17 0 0 1 18 1z" fill="url(#ch)" />
        <rect x="8" y="11" width="14" height="14" rx="3" fill="#fff" />
        <path d="m23.500 16.500 5-4v11l-5-4z" fill="#fff" />
      </TaskApp>
      <button type="button" aria-label="Mail" className="relative flex h-[60px] w-[66px] items-center justify-center">
        <svg width="36" height="36" viewBox="0 0 36 36" aria-hidden="true">
          <path d="M0 13 18 0l18 13v10H0z" fill="#0b63b8" />
          <path d="M3 12h30v6L18 26 3 17z" fill="#ececec" />
          <path d="M0 13 36 35H1a1 1 0 0 1-1-1z" fill="#1a9be6" />
          <path d="M36 13 15 26l21 9z" fill="#3cc4f5" />
          <path d="M0 34 18 23l18 12H1z" fill="#1590e0" />
        </svg>
        <Badge className="right-[2px] w-[31px]">48</Badge>
      </button>
      <button
        type="button"
        aria-label="Excel"
        className="relative mx-[3px] flex h-[60px] w-[60px] items-center justify-center rounded-md border border-[#4b3e3c] bg-[#40322f]"
      >
        <ExcelLogo size={35} />
        <span className="absolute bottom-px h-[5px] w-6 rounded-full bg-[#4cc2ff]" />
      </button>
      <TaskApp label="Word">
        <path d="M8 2h28v8H8z" fill="#41a5ee" />
        <path d="M8 10h28v8H8z" fill="#2b7cd3" />
        <path d="M8 18h28v8H8z" fill="#185abd" />
        <path d="M8 26h28v8H8z" fill="#103f91" />
        <rect x="0" y="9" width="18" height="18" rx="1.500" fill="#185abd" />
        <text x="9" y="23" textAnchor="middle" fontFamily="Open Sans" fontWeight="700" fontSize="13" fill="#fff">W</text>
      </TaskApp>
      <TaskApp label="File Explorer">
        <defs>
          <linearGradient id="fe" x1="0" y1="0" x2="1" y2="1"><stop stopColor="#ffe082" /><stop offset="1" stopColor="#fbb917" /></linearGradient>
        </defs>
        <path d="M0 2h12l4 3.500V12H0z" fill="#e09f0e" />
        <path d="M0 8h12l4-3h20v29H0z" fill="url(#fe)" />
        <path d="M6 34v-7q0-4 4-4h16q4 0 4 4v7z" fill="#127cc9" />
        <path d="M11 29h14" stroke="#0a5290" strokeWidth="2" />
      </TaskApp>
      <TaskApp label="Microsoft Store">
        <path d="M9 8V1.500h18V8" fill="none" stroke="#27b0ee" strokeWidth="2" />
        <path d="M1 5h34v27q0 4-4 4H5q-4 0-4-4z" fill="#f1f1f1" />
        <path d="M10.500 13h7v7h-7z" fill="#f25022" />
        <path d="M18.500 13h7v7h-7z" fill="#7fba00" />
        <path d="M10.500 21h7v7h-7z" fill="#00a4ef" />
        <path d="M18.500 21h7v7h-7z" fill="#ffb900" />
      </TaskApp>
      <TaskApp label="Microsoft 365">
        <defs>
          <linearGradient id="m1" x1="1" y1="0" x2="0" y2="1"><stop stopColor="#7a5fd0" /><stop offset=".6" stopColor="#8f7be6" /><stop offset="1" stopColor="#1f6fd0" /></linearGradient>
          <linearGradient id="m2" x1="0" y1="0" x2="1" y2="1"><stop stopColor="#1c4fae" /><stop offset="1" stopColor="#45d6fb" /></linearGradient>
          <linearGradient id="m3" x1="0" y1="0" x2="1" y2="0"><stop stopColor="#b98af0" /><stop offset="1" stopColor="#6f4ba0" /></linearGradient>
        </defs>
        <path d="M13 3.500 3.500 9Q2 10 2 12v12.500Q2 27 4 28l8 1V14l7-5V1q-3 0-6 2.500z" fill="url(#m1)" />
        <path d="M19 1q2 0 4 1.500L32 8q2 1 2 4v12l-9-2v-7l-13-7V4.500Q15 1 19 1z" fill="url(#m2)" />
        <path d="M3 27 13 22l5 3 7-4 9 0v3q0 3-2.500 4.500l-9 5.500q-4.500 2.500-9 0z" fill="url(#m3)" />
        <path d="m18 12 6 3v7l-6 3-6-3v-7z" fill="#312320" />
      </TaskApp>
      <button type="button" aria-label="Snapchat" className="relative flex h-[60px] w-[66px] items-center justify-center">
        <svg width="36" height="36" viewBox="0 0 36 36" aria-hidden="true">
          <circle cx="18" cy="18" r="18" fill="#fffc00" />
          <path
            d="M18 7.500c4 0 6 3 6 6.500v3l2.500-.5c.8.900-.8 1.800-2 2.500.5 3 2.500 4.500 4.500 5.200-.5 1.300-2 1.300-3 1.500l-.6 1.500c-1.600-.4-3-.2-4 .8-2 1.500-4.800 1.500-6.800 0-1-1-2.400-1.200-4-.8l-.6-1.500c-1-.2-2.500-.2-3-1.500 2-.7 4-2.200 4.500-5.200-1.200-.7-2.800-1.600-2-2.500l2.500.5v-3c0-3.500 2-6.500 6-6.500z"
            fill="#fff"
            stroke="#000"
            strokeWidth="1.200"
          />
        </svg>
        <Badge className="right-[6px] w-6">4</Badge>
      </button>
      <button type="button" aria-label="Chrome" className="relative flex h-[60px] w-[66px] items-center justify-center">
        <svg width="36" height="36" viewBox="0 0 36 36" aria-hidden="true">
          <path d="M18 18 2.400 9A18 18 0 0 1 33.600 9z" fill="#ea4335" />
          <path d="M18 18v18A18 18 0 0 1 2.400 9L10 22z" fill="#34a853" />
          <path d="M25.800 22.500 18 36c9 0 18-7 18-18 0-3-.8-6-2.400-9H18z" fill="#fbbc04" />
          <circle cx="18" cy="18" r="8.800" fill="#fff" />
          <circle cx="18" cy="18" r="7" fill="#3b7ded" />
        </svg>
        <svg width="24" height="24" viewBox="0 0 24 24" className="absolute top-[5px] right-[6px]" aria-hidden="true">
          <circle cx="12" cy="12" r="12" fill="#5b9fc2" />
          <path d="M5 12h14l-1.500 8h-11z" fill="#e8cfae" />
          <path d="M4 10c2-2 14-2 16 0v3H4z" fill="#a61e37" />
          <path d="M12 9V3M10 5l4-2" stroke="#3c5a33" strokeWidth="1.500" />
          <circle cx="5" cy="18" r="3" fill="#d94b3a" />
        </svg>
        <span className="absolute bottom-0.5 h-[5px] w-[9px] rounded-full bg-[#a39c9a]" />
      </button>
      <TaskApp label="PowerPoint">
        <circle cx="19.500" cy="18" r="16" fill="#d35230" />
        <path d="M19.500 18V2a16 16 0 0 1 16 16z" fill="#ff8f6b" />
        <path d="M19.500 18V2a16 16 0 0 0-16 16z" fill="#ed6c47" />
        <rect x="0" y="9" width="18" height="18" rx="1.500" fill="#c43e1c" />
        <text x="9" y="23" textAnchor="middle" fontFamily="Open Sans" fontWeight="700" fontSize="14" fill="#fff">P</text>
      </TaskApp>
      <TaskApp label="Edge">
        <defs>
          <linearGradient id="e1" x1="0" y1="0" x2="1" y2=".5"><stop stopColor="#1b9de2" /><stop offset=".5" stopColor="#35c1d0" /><stop offset="1" stopColor="#66e05a" /></linearGradient>
          <linearGradient id="e2" x1="0" y1="0" x2="0" y2="1"><stop stopColor="#1191e0" /><stop offset="1" stopColor="#0b6fd0" /></linearGradient>
        </defs>
        <path d="M0 17C1 7 8 0 18 0c10 0 18 7 18 15 0 6-4 9-9 9-4 0-6-1-6-2 0-1 1.500-2 1.500-4 0-4-4-8-10-8C7 10 2 12 0 17z" fill="url(#e1)" />
        <path d="M0 18c0-6 5-9.500 11-9.500 7 0 11 4 11.500 9C15 12 10 18 12 25c2 6 7 9 12 9.500-2 1-4 1.500-6 1.500C8 36 0 28 0 18z" fill="url(#e2)" />
        <path d="M12.500 19c-1.500 8 4 13 11 13 4 0 7-1 9.500-4.500.5-.7 1-.2.700.5C31 33 25 36 20 36 12 35 8 25 12.500 19z" fill="#114a8b" />
      </TaskApp>
    </>
  );
}

function Taskbar() {
  return (
    <footer className="grid h-[72px] grid-cols-[1fr_auto_1fr] items-center bg-[#312320] text-[17px] text-white">
      <button type="button" className="flex items-center gap-[11px] pl-[30px] text-left">
        <svg width="36" height="24" viewBox="0 0 36 24" aria-hidden="true">
          <defs>
            <linearGradient id="cloud" x1="0" y1="0" x2="0" y2="1"><stop stopColor="#7fa8ec" /><stop offset="1" stopColor="#d5e4fa" /></linearGradient>
          </defs>
          <path d="M8 24a8 8 0 0 1-1-15.500A10.500 10.500 0 0 1 27 7a8.500 8.500 0 0 1 1 17z" fill="url(#cloud)" />
        </svg>
        <span className="leading-6">
          11°C
          <br />
          <span className="text-[#c9c2c0]">Cloudy</span>
        </span>
      </button>

      <div className="flex items-center pl-[2px]">
        <button type="button" aria-label="Start" className="flex w-[66px] justify-center">
          <svg width="36" height="36" viewBox="0 0 36 36" aria-hidden="true">
            <defs>
              <linearGradient id="win" x1="0" y1="0" x2="1" y2="1"><stop stopColor="#7df3ff" /><stop offset="1" stopColor="#0a95ff" /></linearGradient>
            </defs>
            <path d="M1.500 0H17v17.500H0V1.500A1.500 1.500 0 0 1 1.500 0zM18.500 0h15.500A1.500 1.500 0 0 1 35.500 1.500v16h-17zM0 19h17v17H1.500A1.500 1.500 0 0 1 0 34.500zM18.500 19h17v15.500A1.500 1.500 0 0 1 34 36H18.500z" fill="url(#win)" />
          </svg>
        </button>
        <button
          type="button"
          className="mr-[3px] ml-[5px] flex h-12 w-[150px] items-center gap-2 rounded-full border border-[#43373a] bg-[#3e302f] pl-[33px]"
        >
          <Svg w={21} h={21}>
            <circle cx="12.500" cy="8.500" r="7" stroke="#fff" strokeWidth="2.200" />
            <path d="M7.500 13.500 1 20" stroke="#fff" strokeWidth="2.500" />
          </Svg>
          Search
        </button>
        <TaskIcons />
      </div>

      <div className="flex items-center justify-end pr-7">
        <button type="button" aria-label="Show hidden icons">
          <Svg w={18} h={12}><path d="m1 10 8-8 8 8" stroke="#fff" /></Svg>
        </button>
        <span className="ml-[31px] w-[62px]">ENG</span>
        <Svg w={24} h={20}>
          <path d="M1 7.500c6-7.500 16-7.500 22 0M4.500 11c4.500-5 10.500-5 15 0M8 14.500c2.500-2.500 5.500-2.500 8 0" stroke="#fff" strokeWidth="1.800" />
          <circle cx="12" cy="17.500" r="2" fill="#fff" stroke="none" />
        </Svg>
        <Svg w={24} h={20} className="ml-3">
          <path d="M1 7h4l5-5v16l-5-5H1z" stroke="#fff" />
          <path d="M13 7c1.500 2 1.500 4 0 6M16 4c3.500 4 3.500 8 0 12" stroke="#fff" />
          <path d="M19.500 1.500c4.500 5 4.500 12 0 17" stroke="#8b8381" />
        </Svg>
        <Svg w={24} h={20} className="ml-3">
          <path d="M2 0v4M6 0v4M0 4h8v2c0 3-3 3-4 3v10" stroke="#fff" />
          <path d="M10 4.500h9.500v13h-12v-7" stroke="#fff" strokeWidth="1.800" />
          <path d="M11 7.500h6v7h-7v-5zM22 9v4" fill="#fff" stroke="#fff" />
        </Svg>
        <span className="ml-[23px] text-right leading-[23px]">
          15:13
          <br />
          19/03/2023
        </span>
      </div>
    </footer>
  );
}

export default function App() {
  return (
    <div className="overflow-hidden bg-linear-to-b from-[#e9ecf2] from-30% to-[#f2eae8] font-['Open_Sans',sans-serif]">
      <TitleBar />
      <TabBar />
      <Ribbon />
      <FormulaBar />
      <Worksheet />
      <SheetTabs />
      <StatusBar />
      <Taskbar />
    </div>
  );
}
